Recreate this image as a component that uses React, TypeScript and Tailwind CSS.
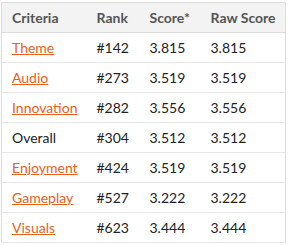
import React from "react";

type Row = { name: string; rank: string; score: string; raw: string; link: boolean };

const rows: Row[] = [
  { name: "Theme", rank: "#142", score: "3.815", raw: "3.815", link: true },
  { name: "Audio", rank: "#273", score: "3.519", raw: "3.519", link: true },
  { name: "Innovation", rank: "#282", score: "3.556", raw: "3.556", link: true },
  { name: "Overall", rank: "#304", score: "3.512", raw: "3.512", link: false },
  { name: "Enjoyment", rank: "#424", score: "3.519", raw: "3.519", link: true },
  { name: "Gameplay", rank: "#527", score: "3.222", raw: "3.222", link: true },
  { name: "Visuals", rank: "#623", score: "3.444", raw: "3.444", link: true },
];

export default function App() {
  return (
    <div className="bg-white w-[289px] h-[246px] pt-[2px] pl-[1px] font-['Lato',sans-serif]">
      <table className="w-[285px] border-collapse border border-[#dcdcdc] text-[14px] table-fixed">
        <colgroup>
          <col className="w-[95px]" />
          <col className="w-[53px]" />
          <col className="w-[61px]" />
          <col />
        </colgroup>
        <thead>
          <tr className="h-[30px] bg-[#f3f3f3] border-b border-[#dcdcdc]">
            <th className="text-left font-bold text-[#555] pl-[10px]">Criteria</th>
            <th className="text-left font-bold text-[#555]">Rank</th>
            <th className="text-left font-bold text-[#555]">Score*</th>
            <th className="text-left font-bold text-[#555]">Raw Score</th>
          </tr>
        </thead>
        <tbody>
          {rows.map((r) => (
            <tr key={r.name} className="h-[30px] border-b border-[#e6e6e6] text-[#222]">
              <td className="pl-[10px]">
                {r.link ? (
                  <a href="#" className="text-[#e8601c] underline">
                    {r.name}
                  </a>
                ) : (
                  r.name
                )}
              </td>
              <td>{r.rank}</td>
              <td>{r.score}</td>
              <td>{r.raw}</td>
            </tr>
          ))}
        </tbody>
      </table>
    </div>
  );
}
